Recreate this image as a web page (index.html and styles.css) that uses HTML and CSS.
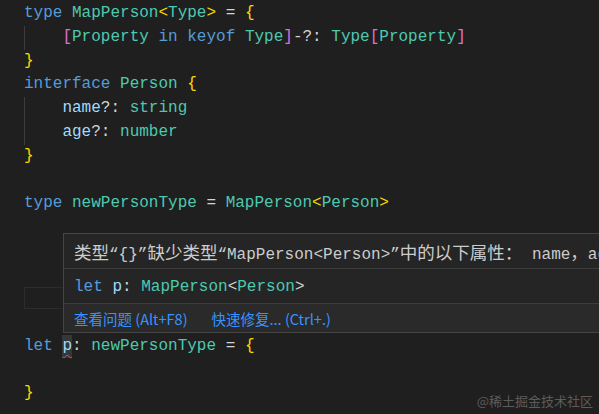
FILE: index.html
```html
<!DOCTYPE html>
<html>
<head>
<meta charset="utf-8">
<link rel="stylesheet" href="styles.css">
</head>
<body>
<div class="editor">
  <div class="line"><span class="kw">type</span> <span class="ty">MapPerson</span><span class="b1">&lt;</span><span class="ty">Type</span><span class="b1">&gt;</span> = <span class="b1">{</span></div>
  <div class="line ind">    <span class="b2">[</span><span class="ty">Property</span> <span class="kw">in</span> <span class="kw">keyof</span> <span class="ty">Type</span><span class="b2">]</span>-?: <span class="ty">Type</span><span class="b2">[</span><span class="ty">Property</span><span class="b2">]</span></div>
  <div class="line"><span class="b1">}</span></div>
  <div class="line"><span class="kw">interface</span> <span class="ty">Person</span> <span class="b1">{</span></div>
  <div class="line ind">    <span class="pr">name</span>?: <span class="ty">string</span></div>
  <div class="line ind">    <span class="pr">age</span>?: <span class="ty">number</span></div>
  <div class="line"><span class="b1">}</span></div>
  <div class="line"> </div>
  <div class="line"><span class="kw">type</span> <span class="ty">newPersonType</span> = <span class="ty">MapPerson</span><span class="b1">&lt;</span><span class="ty">Person</span><span class="b1">&gt;</span></div>
  <div class="line"> </div>
  <div class="line"> </div>
  <div class="line"> </div>
  <div class="line"><span class="frame"></span></div>
  <div class="line"> </div>
  <div class="line"><span class="kw">let</span> <span class="pr sel">p</span>: <span class="ty">newPersonType</span> = <span class="b1">{</span></div>
  <div class="line"> </div>
  <div class="line"><span class="b1">}</span></div>
</div>

<div class="hover">
  <div class="msg"><span class="cj">类型</span>“{}”<span class="cj">缺少类型</span>“MapPerson&lt;Person&gt;”<span class="cj">中的以下属性：</span> name<span class="cj">，</span>age</div>
  <div class="sig"><span class="kw">let</span> <span class="pr">p</span>: <span class="ty">MapPerson</span>&lt;<span class="ty">Person</span>&gt;</div>
  <div class="status">
    <span class="act">查看问题 (Alt+F8)</span>
    <span class="act">快速修复... (Ctrl+.)</span>
  </div>
</div>

<div class="mark">@稀土掘金技术社区</div>
</body>
</html>
```
FILE: styles.css
```css
html, body {
  margin: 0;
  padding: 0;
  background: #1f1f1f;
  width: 599px;
  height: 414px;
  overflow: hidden;
}
.editor {
  padding: 2px 0 0 24px;
  font-family: "Liberation Mono", "DejaVu Sans Mono", "Noto Sans CJK SC", monospace;
  font-size: 16px;
  color: #d4d4d4;
}
.line {
  height: 23.75px;
  line-height: 23.75px;
  white-space: pre;
}
.ind {
  box-shadow: inset 1px 0 0 #3c3c3c;
}
.kw { color: #569cd6; }
.ty { color: #4ec9b0; }
.pr { color: #9cdcfe; }
.b1 { color: #ffd700; }
.b2 { color: #da70d6; }
.sel {
  background: #343638;
  text-decoration: underline wavy #f14c4c;
  text-decoration-thickness: 1px;
  text-underline-offset: 4px;
  display: inline-block;
}
.frame {
  display: inline-block;
  width: 60px;
  height: 20px;
  border: 1px solid #2c2c2c;
  vertical-align: middle;
}
.hover {
  position: absolute;
  left: 63px;
  top: 233px;
  width: 560px;
  background: #252526;
  border: 1px solid #454545;
  color: #cccccc;
}
.msg {
  height: 34px;
  line-height: 36px;
  padding-left: 10px;
  font-family: "Liberation Mono", "DejaVu Sans Mono", "Noto Sans CJK SC", monospace;
  font-size: 16px;
  white-space: pre;
  overflow: hidden;
  border-bottom: 1px solid #3c3c3c;
}
.cj {
  font-family: "Noto Sans CJK SC", sans-serif;
  font-size: 17.5px;
}
.sig {
  height: 34px;
  line-height: 36px;
  padding-left: 10px;
  font-family: "Liberation Mono", "DejaVu Sans Mono", monospace;
  font-size: 16px;
  white-space: pre;
  color: #d4d4d4;
  border-bottom: 1px solid #3c3c3c;
}
.status {
  height: 28px;
  display: flex;
  align-items: center;
  gap: 24px;
  padding-left: 10px;
  background: #2a2a2b;
  font-family: "Noto Sans CJK SC", "Noto Sans", sans-serif;
  font-size: 14.5px;
}
.act { color: #3794ff; }
.mark {
  position: absolute;
  right: 6px;
  bottom: 4px;
  font-family: "Noto Sans CJK SC", sans-serif;
  font-size: 13px;
  color: #5c5c5c;
}
```
